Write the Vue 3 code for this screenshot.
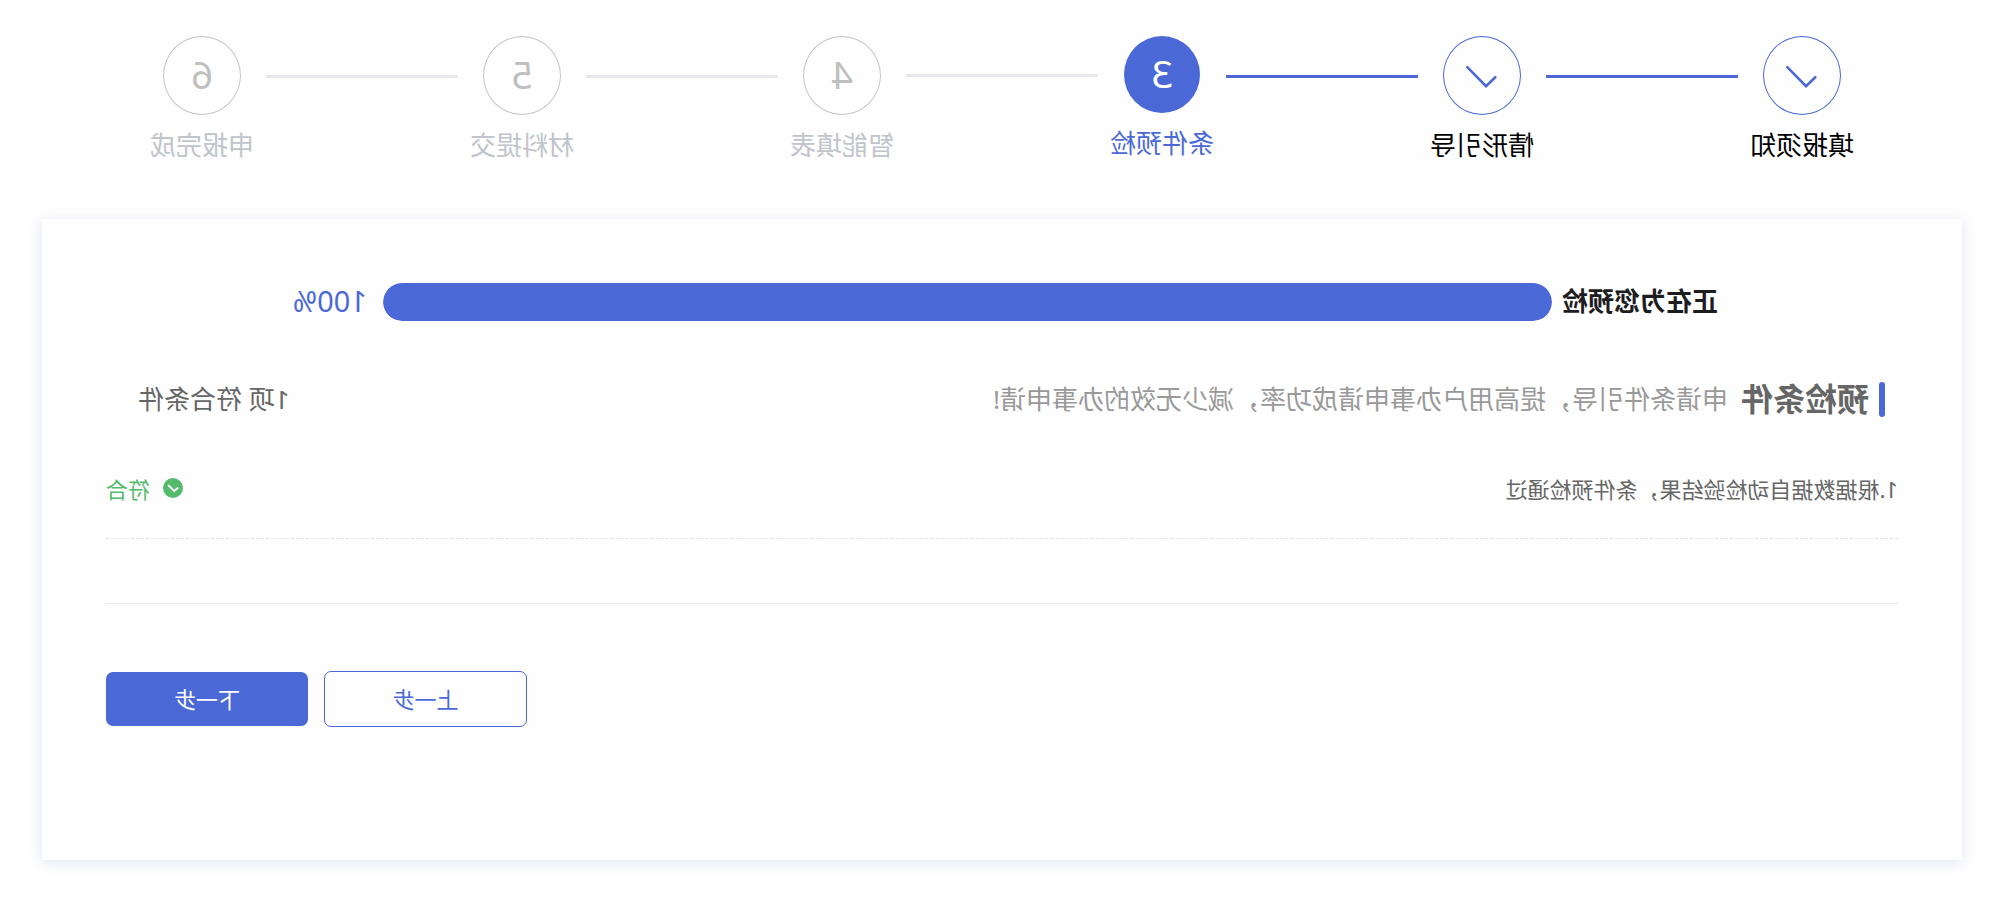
<script setup>
import { ref } from 'vue'

const current = 3
const steps = ['填报须知', '情形引导', '条件预检', '智能填表', '材料提交', '申报完成']
const percent = ref(100)
const results = ['根据数据自动检验结果，条件预检通过']

function stateOf(index) {
  const n = index + 1
  if (n < current) return 'done'
  return n === current ? 'active' : 'todo'
}
</script>

<template>
  <div class="page">
    <ol class="steps">
      <li v-for="(label, i) in steps" :key="label" class="step" :class="stateOf(i)">
        <div class="node">
          <span class="circle">
            <svg v-if="stateOf(i) === 'done'" width="78" height="78" viewBox="0 0 78 78" aria-hidden="true">
              <path d="M25.7 41.2 L35 50.2 L53.7 31.2" />
            </svg>
            <template v-else>{{ i + 1 }}</template>
          </span>
          <span class="label">{{ label }}</span>
        </div>
        <span v-if="i < steps.length - 1" class="line"></span>
      </li>
    </ol>

    <main class="card">
      <div class="progress">
        <span id="progress-label" class="progress-label">正在为您预检</span>
        <div class="track" role="progressbar" aria-labelledby="progress-label" :aria-valuenow="percent">
          <div class="fill" :style="{ width: percent + '%' }"></div>
        </div>
        <span class="percent">{{ percent }}%</span>
      </div>

      <header class="head">
        <h2>预检条件</h2>
        <p class="hint">申请条件引导，提高用户办事申请成功率，减少无效的办事申请!</p>
        <span class="count">{{ results.length }}项 符合条件</span>
      </header>

      <ul class="results">
        <li v-for="(text, i) in results" :key="text">
          <span>{{ i + 1 }}.{{ text }}</span>
          <span class="status">
            <svg width="20" height="20" viewBox="0 0 20 20" aria-hidden="true">
              <circle cx="10" cy="10" r="10" />
              <path d="M5.3 10 L8.8 13 L14.5 7.4" />
            </svg>
            符合
          </span>
        </li>
      </ul>

      <footer class="actions">
        <button type="button" class="secondary">上一步</button>
        <button type="button" class="primary">下一步</button>
      </footer>
    </main>
  </div>
</template>

<style>
body {
  background: #fefefe;
}
</style>

<style scoped>
.page {
  --blue: #4b69d6;
  box-sizing: border-box;
  padding: 36px 42px 46px 46px;
  font-family: "Noto Sans", "Noto Sans CJK SC", sans-serif;
  color: #666;
  transform: scaleX(-1);
}

.steps {
  display: flex;
  margin: 0;
  padding: 0 96px;
  list-style: none;
}
.step {
  display: flex;
  flex: 1;
  align-items: flex-start;
}
.step:last-child {
  flex: none;
}
.node {
  display: flex;
  flex-direction: column;
  align-items: center;
  gap: 12px;
  width: 128px;
}
.circle {
  display: flex;
  align-items: center;
  justify-content: center;
  width: 76px;
  height: 75px;
  padding-bottom: 2px;
  border: 1px solid #c0c4cc;
  border-radius: 50%;
  font-size: 38px;
  line-height: 75px;
  color: #bfbfbf;
}
.circle svg {
  flex: none;
  fill: none;
  stroke: var(--blue);
  stroke-width: 2.6;
  stroke-linecap: round;
}
.label {
  font-size: 26px;
  line-height: 36px;
  white-space: nowrap;
  color: #c0c4cc;
}
.line {
  flex: 1;
  height: 3px;
  margin-top: 39px;
  background: #e9e9ed;
}
.done .circle {
  border-color: var(--blue);
}
.done .label {
  color: #000;
}
.done .line {
  background: var(--blue);
}
.active .circle {
  border: 0;
  background: var(--blue);
  color: #fff;
}
.active .label {
  color: var(--blue);
}
.active .line {
  margin-top: 38px;
}

.card {
  margin-top: 56px;
  padding: 64px 64px 133px;
  background: #fefefe;
  box-shadow: 0 2px 12px rgba(75, 105, 180, 0.17);
}
.progress {
  display: flex;
  align-items: center;
  height: 38px;
  padding: 0 187px 0 180px;
}
.progress-label {
  padding: 0 10px 2px 0;
  font-size: 26px;
  font-weight: 700;
  line-height: 36px;
  color: #1d1d1f;
}
.track {
  flex: 1;
  height: 38px;
  border-radius: 19px;
  background: #ebeef5;
  overflow: hidden;
}
.fill {
  height: 100%;
  border-radius: 19px;
  background: var(--blue);
}
.percent {
  padding: 0 0 2px 16px;
  font-size: 29px;
  line-height: 36px;
  color: var(--blue);
}

.head {
  display: flex;
  align-items: center;
  height: 36px;
  margin-top: 60px;
  padding: 0 32px 0 13px;
}
.head h2 {
  margin: 0;
  padding-left: 10px;
  font-size: 32px;
  line-height: 36px;
  white-space: nowrap;
}
.head::before {
  content: "";
  width: 6px;
  height: 35px;
  border-radius: 3px;
  background: var(--blue);
}
.hint {
  flex: 1;
  margin: 0 0 0 13px;
  font-size: 26px;
  line-height: 36px;
  color: #999;
}
.count {
  font-size: 26px;
  line-height: 36px;
}

.results {
  margin: 21px 0 0;
  padding: 0;
  list-style: none;
}
.results li {
  display: flex;
  align-items: center;
  justify-content: space-between;
  height: 100px;
  border-bottom: 1px dashed #e2e2e2;
  font-size: 22px;
}
.status {
  display: flex;
  align-items: center;
  gap: 13px;
  color: #55ba6c;
}
.status circle {
  fill: #55ba6c;
}
.status path {
  fill: none;
  stroke: #fff;
  stroke-width: 1.8;
  stroke-linecap: round;
}

.actions {
  display: flex;
  align-items: center;
  justify-content: flex-end;
  gap: 16px;
  margin-top: 64px;
  padding-top: 67px;
  border-top: 1px solid #ebebeb;
}
.actions button {
  box-sizing: content-box;
  width: 202px;
  height: 54px;
  padding: 0;
  border: 0;
  border-radius: 7px;
  font-family: inherit;
  font-size: 22px;
  line-height: 52px;
  cursor: pointer;
}
.actions .primary {
  background: var(--blue);
  color: #fff;
}
.actions .secondary {
  width: 201px;
  border: 1px solid var(--blue);
  background: #fefefe;
  color: var(--blue);
}
</style>
